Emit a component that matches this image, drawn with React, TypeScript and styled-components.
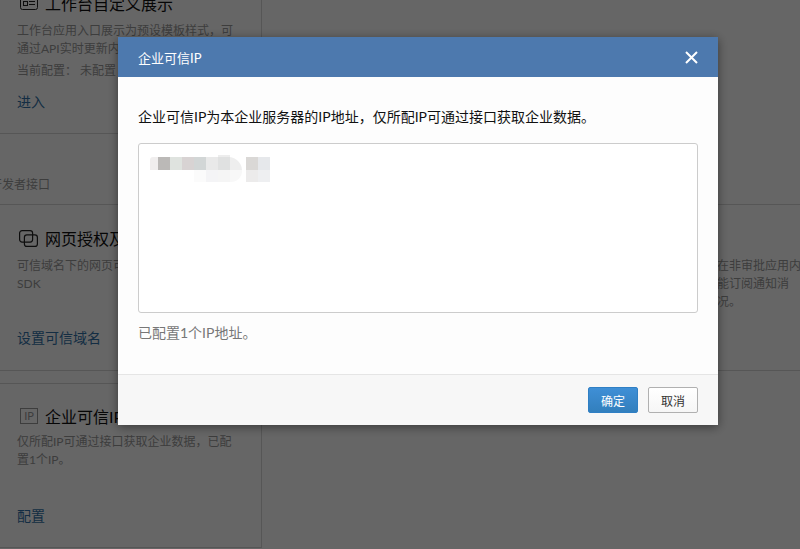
import React from 'react';
import styled, { createGlobalStyle } from 'styled-components';

const FONT = `Lato, "Noto Sans CJK SC", sans-serif`;

const GlobalStyle = createGlobalStyle`
  html, body {
    margin: 0;
    padding: 0;
    width: 800px;
    height: 549px;
    overflow: hidden;
    background: #fff;
    font-family: ${FONT};
  }
`;

const Page = styled.div`
  display: flex;
  flex-direction: column;
  width: 800px;
  height: 549px;
  overflow: hidden;
`;

const TopCard = styled.section`
  flex: none;
  box-sizing: border-box;
  width: 262px;
  height: 134px;
  padding: 0 0 0 17px;
  border-right: 1px solid #d8d8d8;
`;

const TopRule = styled.div`
  flex: none;
  width: 262px;
  height: 1px;
  margin-top: -1px;
  background: #d8d8d8;
`;

const SectionLabel = styled.div`
  flex: none;
  box-sizing: border-box;
  height: 71px;
  margin-left: -10px;
  padding-top: 42px;
  font-size: 12px;
  line-height: 18px;
  color: #999;
  border-bottom: 1px solid #d8d8d8;
`;

const MiddleRow = styled.div`
  flex: none;
  display: flex;
  height: 165px;
  border-bottom: 1px solid #d8d8d8;
`;

const MiddleCard = styled.section`
  box-sizing: border-box;
  width: 262px;
  padding: 21px 0 0 17px;
`;

const SideNote = styled.p`
  flex: 1;
  margin: 0;
  padding: 52px 0 0 455px;
  font-size: 12px;
  line-height: 18px;
  color: #999;
  white-space: nowrap;
  overflow: hidden;
`;

const BottomCard = styled.section`
  flex: none;
  box-sizing: border-box;
  width: 262px;
  height: 165px;
  margin-top: 12px;
  padding: 20px 0 0 17px;
  border-top: 1px solid #d8d8d8;
  border-right: 1px solid #d8d8d8;
  border-bottom: 1px solid #d8d8d8;
`;

const TitleRow = styled.div<{ $offset?: number }>`
  display: flex;
  align-items: center;
  gap: 7px;
  height: 24px;
  margin-top: ${(p) => p.$offset ?? 0}px;
  font-size: 16px;
  color: #111;
  white-space: nowrap;
`;

const IconSlot = styled.span`
  display: flex;
  align-items: center;
  justify-content: flex-end;
  width: 21px;
  height: 20px;
  color: #222;
`;

const IpBadge = styled.span`
  box-sizing: border-box;
  width: 18px;
  height: 16px;
  border: 1px solid #999;
  font-size: 11px;
  line-height: 14px;
  text-align: center;
  color: #999;
`;

const Desc = styled.p<{ $top?: number }>`
  width: 222px;
  margin: ${(p) => p.$top ?? 7}px 0 0;
  font-size: 12px;
  line-height: 18px;
  color: #999;
`;

const ConfigLine = styled.p`
  margin: 4px 0 0;
  font-size: 12px;
  line-height: 18px;
  color: #999;
  white-space: nowrap;
`;

const ActionLink = styled.a<{ $gap: number }>`
  display: block;
  margin-top: ${(p) => p.$gap}px;
  font-size: 14px;
  line-height: 20px;
  color: #3272a8;
`;

const Backdrop = styled.div`
  position: fixed;
  inset: 0;
  background: rgba(0, 0, 0, 0.6);
`;

const Dialog = styled.div`
  position: fixed;
  left: 118px;
  top: 37px;
  display: flex;
  flex-direction: column;
  width: 600px;
  height: 388px;
  background: #fff;
  box-shadow: 0 2px 10px rgba(0, 0, 0, 0.45);
`;

const DialogHeader = styled.header`
  display: flex;
  align-items: center;
  justify-content: space-between;
  flex: none;
  height: 40px;
  padding: 0 20px;
  background: #4d79ae;
  color: #fff;
  font-size: 13px;
`;

const CloseButton = styled.button`
  display: flex;
  width: 13px;
  height: 13px;
  padding: 0;
  border: 0;
  background: none;
  color: #fff;
`;

const DialogBody = styled.div`
  flex: 1;
  padding: 29px 20px 0;
  background: #fdfdfd;
`;

const Intro = styled.p`
  margin: 0 0 15px;
  font-size: 14px;
  line-height: 22px;
  color: #111;
  white-space: nowrap;
`;

const IpBox = styled.div`
  box-sizing: border-box;
  height: 170px;
  padding: 11px 0 0 11px;
  background: #fff;
  border: 1px solid #ccc;
  border-radius: 3px;
`;

const IpCount = styled.p`
  margin: 10px 0 0;
  font-size: 14px;
  line-height: 20px;
  color: #777;
`;

const DialogFooter = styled.footer`
  display: flex;
  justify-content: flex-end;
  gap: 10px;
  flex: none;
  box-sizing: border-box;
  height: 51px;
  padding: 12px 20px 0;
  background: #f7f7f7;
  border-top: 1px solid #e5e5e5;
`;

const Button = styled.button<{ $primary?: boolean }>`
  box-sizing: border-box;
  width: 50px;
  height: 26px;
  padding: 0;
  border-radius: 2px;
  font-family: ${FONT};
  font-size: 12px;
  color: ${(p) => (p.$primary ? '#fff' : '#333')};
  border: 1px solid ${(p) => (p.$primary ? '#2f7fc4' : '#b0b0b0')};
  background: ${(p) =>
    p.$primary ? 'linear-gradient(#3f8fd6, #327fbd)' : 'linear-gradient(#fff, #f6f6f6)'};
`;

const TOP_CELLS = [
  [8, '#bbb9b7'],
  [20, '#dfe3df'],
  [32, '#d8d3d3'],
  [44, '#d2d6d6'],
  [56, '#e9e9e9'],
  [68, '#e0e1e1'],
  [96, '#dad8d6'],
  [108, '#e6e8eb'],
] as const;

const BOTTOM_CELLS = [
  [44, '#fbfbfb'],
  [56, '#f4f4f6'],
  [68, '#f5f5f5'],
  [96, '#ecebeb'],
  [108, '#eeeff1'],
] as const;

const RedactedIp = () => (
  <svg width="122" height="30" viewBox="0 0 122 30" display="block">
    <path d="M8 2H3a3 3 0 0 0 -3 3v10h8z" fill="#f0eeee" />
    <path d="M56 2h22a14 14 0 0 1 14 14v0a11 11 0 0 1 -11 11H56z" fill="#f8f8f8" />
    <path d="M78 2a14 14 0 0 1 14 13H80V2z" fill="#eeeeee" />
    <rect x="68" y="0" width="12" height="2" fill="#ededed" />
    {TOP_CELLS.map(([x, fill]) => (
      <rect key={x} x={x} y={2} width={12} height={13} fill={fill} />
    ))}
    {BOTTOM_CELLS.map(([x, fill]) => (
      <rect key={x} x={x} y={15} width={12} height={12} fill={fill} />
    ))}
  </svg>
);

export default function App() {
  return (
    <>
      <GlobalStyle />
      <Page>
        <TopCard>
          <TitleRow $offset={-9}>
            <IconSlot>
              <svg width="18" height="14" viewBox="0 0 18 14" fill="none" stroke="currentColor">
                <rect x="0.5" y="0.5" width="17" height="13" rx="2" />
                <rect x="3.5" y="5.5" width="4" height="4" />
                <path d="M9 5.5h6M9 8.5h6" />
              </svg>
            </IconSlot>
            工作台自定义展示
          </TitleRow>
          <Desc>工作台应用入口展示为预设模板样式，可通过API实时更新内容数据。</Desc>
          <ConfigLine>当前配置： 未配置</ConfigLine>
          <ActionLink $gap={12}>进入</ActionLink>
        </TopCard>
        <TopRule />
        <SectionLabel>开发者接口</SectionLabel>
        <MiddleRow>
          <MiddleCard>
            <TitleRow>
              <IconSlot>
                <svg width="19" height="17" viewBox="0 0 19 17" fill="none" stroke="currentColor" strokeWidth="1.2">
                  <rect x="0.6" y="0.6" width="13" height="11.5" rx="2.5" />
                  <rect x="5.4" y="4.9" width="13" height="11.5" rx="2.5" />
                </svg>
              </IconSlot>
              网页授权及
            </TitleRow>
            <Desc>可信域名下的网页可使用网页授权及JS-SDK</Desc>
            <ActionLink $gap={35}>设置可信域名</ActionLink>
          </MiddleCard>
          <SideNote>
            在非审批应用内
            <br />
            能订阅通知消
            <br />
            况。
          </SideNote>
        </MiddleRow>
        <BottomCard>
          <TitleRow>
            <IconSlot>
              <IpBadge>IP</IpBadge>
            </IconSlot>
            企业可信IP
          </TitleRow>
          <Desc $top={5}>仅所配IP可通过接口获取企业数据，已配置1个IP。</Desc>
          <ActionLink $gap={37}>配置</ActionLink>
        </BottomCard>
      </Page>
      <Backdrop />
      <Dialog>
        <DialogHeader>
          企业可信IP
          <CloseButton aria-label="关闭">
            <svg width="13" height="13" viewBox="0 0 13 13" stroke="currentColor" strokeWidth="2">
              <path d="M1 1l11 11M12 1L1 12" />
            </svg>
          </CloseButton>
        </DialogHeader>
        <DialogBody>
          <Intro>企业可信IP为本企业服务器的IP地址，仅所配IP可通过接口获取企业数据。</Intro>
          <IpBox>
            <RedactedIp />
          </IpBox>
          <IpCount>已配置1个IP地址。</IpCount>
        </DialogBody>
        <DialogFooter>
          <Button $primary>确定</Button>
          <Button>取消</Button>
        </DialogFooter>
      </Dialog>
    </>
  );
}
